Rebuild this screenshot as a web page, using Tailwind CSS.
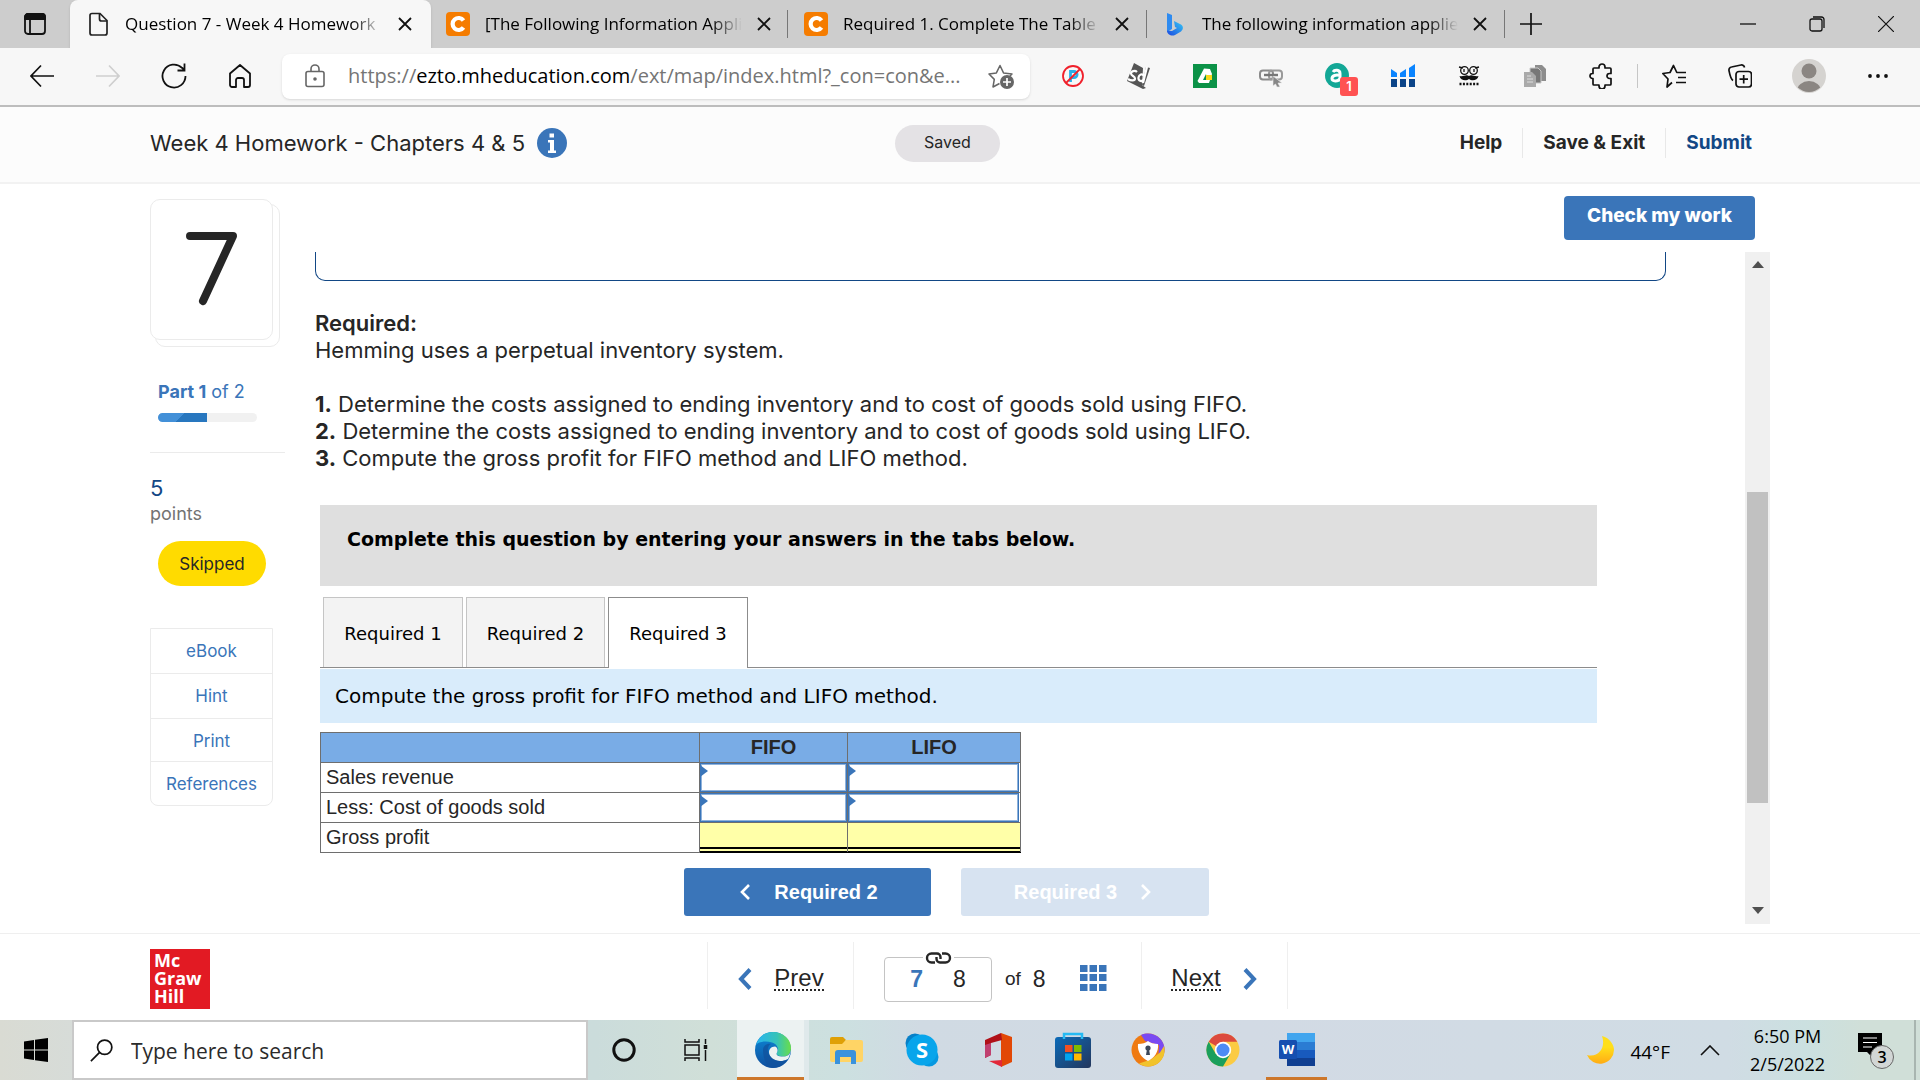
<!DOCTYPE html>
<html lang="en">
<head>
  <meta charset="UTF-8" />
  <meta name="viewport" content="width=device-width, initial-scale=1.0"/>
  <title>Question 7 - Week 4 Homework</title>
  <script src="https://cdn.jsdelivr.net/npm/@tailwindcss/browser@4"></script>
</head>
<body class="flex min-h-screen flex-col bg-white font-['Inter',sans-serif] text-[#262626]">

  <!-- Tab strip -->
  <div class="flex h-12 items-stretch bg-[#cdcdcd] font-['Open_Sans',sans-serif] text-[17px] text-black">
    <button aria-label="Tab actions" class="flex w-[70px] items-center justify-center">
      <svg width="24" height="24" viewBox="0 0 24 24" fill="none" stroke="#111" stroke-width="1.8"><rect x="2" y="2" width="20" height="20" rx="3"/><path d="M2 7V5a3 3 0 0 1 3-3h14a3 3 0 0 1 3 3v2z" fill="#111"/><path d="M7 7v15"/></svg>
    </button>
    <div class="flex w-[361px] items-center gap-[15px] rounded-t-lg bg-[#f7f7f7] pr-[19px] pl-4 shadow">
      <svg class="shrink-0" width="24" height="24" viewBox="0 0 24 24" fill="none" stroke="#222" stroke-width="1.7"><path d="M4 3.500a2 2 0 0 1 2-2h8L21 8.500V21a2 2 0 0 1-2 2H6a2 2 0 0 1-2-2z"/><path d="M13.500 1.500V7a2 2 0 0 0 2 2H21"/></svg>
      <span class="min-w-0 flex-1 overflow-hidden whitespace-nowrap [mask-image:linear-gradient(to_right,#000_88%,transparent)]">Question 7 - Week 4 Homework</span>
      <button aria-label="Close tab"><svg width="14" height="14" viewBox="0 0 14 14" stroke="#111" stroke-width="1.8"><path d="M1 1l12 12M13 1L1 13"/></svg></button>
    </div>
    <div class="flex w-[356px] items-center gap-[15px] pr-[16px] pl-[15px]">
      <svg class="shrink-0" width="24" height="24" viewBox="0 0 24 24"><rect width="24" height="24" rx="4" fill="#f57c00"/><path d="M17.500 15.500a6 6 0 1 1 0-7" fill="none" stroke="#fff" stroke-width="4.200"/></svg>
      <span class="min-w-0 flex-1 overflow-hidden whitespace-nowrap [mask-image:linear-gradient(to_right,#000_88%,transparent)]">[The Following Information Applies</span>
      <button aria-label="Close tab"><svg width="14" height="14" viewBox="0 0 14 14" stroke="#111" stroke-width="1.8"><path d="M1 1l12 12M13 1L1 13"/></svg></button>
    </div>
    <div class="my-[10px] w-px bg-[#777]"></div>
    <div class="flex w-[358px] items-center gap-[15px] pr-[17px] pl-4">
      <svg class="shrink-0" width="24" height="24" viewBox="0 0 24 24"><rect width="24" height="24" rx="4" fill="#f57c00"/><path d="M17.500 15.500a6 6 0 1 1 0-7" fill="none" stroke="#fff" stroke-width="4.200"/></svg>
      <span class="min-w-0 flex-1 overflow-hidden whitespace-nowrap [mask-image:linear-gradient(to_right,#000_88%,transparent)]">Required 1. Complete The Table To</span>
      <button aria-label="Close tab"><svg width="14" height="14" viewBox="0 0 14 14" stroke="#111" stroke-width="1.8"><path d="M1 1l12 12M13 1L1 13"/></svg></button>
    </div>
    <div class="my-[10px] w-px bg-[#777]"></div>
    <div class="flex w-[357px] items-center gap-[15px] pr-[17px] pl-4">
      <svg class="shrink-0" width="24" height="24" viewBox="0 0 24 24"><defs><linearGradient id="bing" x1="0" y1="1" x2="1" y2="0"><stop offset="0" stop-color="#1b48e0"/><stop offset="1" stop-color="#35c8f5"/></linearGradient></defs><path d="M4 1l5 2v14l-5 3z" fill="#2e8bf0"/><path d="M11 9l7 3.500c2.500 1.500 2.500 5 0 7L12 23c-3 1.500-8 0-8-4.500l5 .5 5-3-2-1z" fill="url(#bing)"/></svg>
      <span class="min-w-0 flex-1 overflow-hidden whitespace-nowrap [mask-image:linear-gradient(to_right,#000_88%,transparent)]">The following information applies</span>
      <button aria-label="Close tab"><svg width="14" height="14" viewBox="0 0 14 14" stroke="#111" stroke-width="1.8"><path d="M1 1l12 12M13 1L1 13"/></svg></button>
    </div>
    <div class="my-[10px] w-px bg-[#777]"></div>
    <button aria-label="New tab" class="flex w-[52px] items-center justify-center"><svg width="22" height="22" viewBox="0 0 22 22" stroke="#111" stroke-width="1.700"><path d="M11 0v22M0 11h22"/></svg></button>
    <div class="ml-auto flex">
      <button aria-label="Minimize" class="flex w-[69px] items-center justify-center"><svg width="16" height="16" viewBox="0 0 16 16" stroke="#111" stroke-width="1.300"><path d="M0 8h16"/></svg></button>
      <button aria-label="Restore" class="flex w-[69px] items-center justify-center"><svg width="16" height="16" viewBox="0 0 16 16" fill="none" stroke="#111" stroke-width="1.300"><rect x="1" y="3" width="12" height="12" rx="2"/><path d="M4 1h8.500a2.500 2.500 0 0 1 2.500 2.500V12"/></svg></button>
      <button aria-label="Close window" class="flex w-[69px] items-center justify-center"><svg width="16" height="16" viewBox="0 0 16 16" stroke="#111" stroke-width="1.200"><path d="M0 0l16 16M16 0L0 16"/></svg></button>
    </div>
  </div>

  <!-- Toolbar -->
  <div class="flex h-[59px] items-center border-b-2 border-[#bdbdbd] bg-[#f7f7f7] px-[9px] pb-px">
    <button aria-label="Back" class="flex w-[66px] justify-center"><svg width="24" height="24" viewBox="0 0 24 24" fill="none" stroke="#111" stroke-width="1.700"><path d="M24 12H1M11 1.500L1 12l10 10.500"/></svg></button>
    <button aria-label="Forward" class="flex w-[66px] justify-center"><svg width="24" height="24" viewBox="0 0 24 24" fill="none" stroke="#cfcfcf" stroke-width="1.700"><path d="M0 12h23M13 1.500L23 12 13 22.500"/></svg></button>
    <button aria-label="Refresh" class="flex w-[66px] justify-center"><svg width="26" height="26" viewBox="0 0 26 26" fill="none" stroke="#111" stroke-width="1.800"><path d="M24.500 13A11.500 11.500 0 1 1 21 4.800L23.500 7M23.500 0.500V7.500H16.500"/></svg></button>
    <button aria-label="Home" class="flex w-[66px] justify-center"><svg width="24" height="24" viewBox="0 0 24 24" fill="none" stroke="#111" stroke-width="1.800" stroke-linejoin="round"><path d="M2 9.500L12 1l10 8.500V21a2 2 0 0 1-2 2h-4v-7a2 2 0 0 0-2-2h-4a2 2 0 0 0-2 2v7H4a2 2 0 0 1-2-2z"/></svg></button>
    <div class="mr-[10px] ml-[9px] flex h-[45px] flex-1 items-center rounded-lg bg-white pr-4 pl-[22px] shadow-sm">
      <svg width="22" height="24" viewBox="0 0 22 24" fill="none" stroke="#666" stroke-width="1.600"><rect x="2" y="7.500" width="18" height="15" rx="2"/><path d="M7 7.500V5a4 4 0 0 1 8 0v2.500"/><circle cx="11" cy="15" r="1" fill="#666"/></svg>
      <a href="#" class="ml-[22px] min-w-0 flex-1 truncate font-['Open_Sans',sans-serif] text-[20px] text-[#757575]">https://<span class="text-black">ezto.mheducation.com</span>/ext/map/index.html?_con=con&amp;e...</a>
      <button aria-label="Add to favorites"><svg width="26" height="26" viewBox="0 0 26 26" fill="none" stroke="#666" stroke-width="1.500" stroke-linejoin="round"><path d="M11.500 20.500L5 24l1.300-7.600L1 11l7.400-1.100L12 2.500l3.500 7.400L24 11l-2 2"/><circle cx="19" cy="19" r="7" fill="#666" stroke="none"/><path d="M19 15v8M15 19h8" stroke="#fff" stroke-width="1.700"/></svg></button>
    </div>
    <button aria-label="Pinterest blocker" class="flex w-[66px] justify-center"><svg width="24" height="24" viewBox="0 0 24 24"><path d="M9.500 18V7.500H13a3 3 0 0 1 0 6.200h-2.500" fill="none" stroke="#28b0ea" stroke-width="2.800"/><circle cx="12" cy="12" r="10" fill="none" stroke="#f0202b" stroke-width="1.800"/><path d="M19 5L5 19" stroke="#f0202b" stroke-width="1.800"/></svg></button>
    <button aria-label="Scholar extension" class="flex w-[66px] justify-center"><svg width="26" height="26" viewBox="0 0 26 26"><path d="M8 0l9 5-1 17 4 3-3 1-16-8z" fill="#555"/><path d="M20 4l4 1-6 18-2-1z" fill="#555"/><path d="M11 9c-2-2-6-1-6 1.500 0 2.500 4 2.500 4 5s-4 2.500-7 .5M21 4l-4 16M17.500 12.500c-1-2-4.500-1.500-5 2s3 4.500 4.500 2.500" fill="none" stroke="#fff" stroke-width="2.200"/></svg></button>
    <button aria-label="Tag extension" class="flex w-[66px] justify-center"><svg width="24" height="24" viewBox="0 0 24 24"><rect width="24" height="24" fill="#0b9247"/><path d="M11 4.500l6 .5 2 5-3 9H6L4.500 17z" fill="#fff"/><path d="M13 10l-3 6h4z" fill="#0b9247"/><path d="M13 11h6v5h-6z" fill="#f8d91c"/></svg></button>
    <button aria-label="Link extension" class="flex w-[66px] justify-center"><svg width="26" height="24" viewBox="0 0 26 24" fill="none"><rect x="2" y="6.500" width="13" height="9" rx="3" stroke="#8b8b8b" stroke-width="2"/><rect x="11" y="6.500" width="13" height="9" rx="3" stroke="#9a9a9a" stroke-width="2"/><path d="M6 11h14" stroke="#777" stroke-width="2.400"/><path d="M15 12l9 7h-4l2 4h-3l-1.500-3-2.500 2z" fill="#888" stroke="#eee" stroke-width=".6"/></svg></button>
    <button aria-label="Honey offers, 1 new" class="relative flex w-[66px] justify-center"><svg width="24" height="26" viewBox="0 0 24 26"><ellipse cx="12" cy="12.500" rx="12" ry="12.500" fill="#13a796"/><path d="M8 9c1.500-2.500 7-2.500 7 1.500v8M15 12.500c-4-1-8 0-8 3s6 3.500 8 0" fill="none" stroke="#fff" stroke-width="3"/></svg><span class="absolute top-[14px] left-[36px] flex h-[19px] w-[18px] items-center justify-center rounded-[3px] bg-[#ff5252] text-[13px] font-semibold text-white">1</span></button>
    <button aria-label="Statistics extension" class="flex w-[66px] justify-center"><svg width="26" height="24" viewBox="0 0 26 24"><path d="M1 5l6 4v4H1zM10 9l6-4v8h-6zM19 4l6-4v13h-6z" fill="#0a84ff"/><path d="M1 15h6v8H1zM10 15h6v8h-6zM19 15h6v8h-6z" fill="#0b4488"/></svg></button>
    <button aria-label="Disguise extension" class="flex w-[66px] justify-center"><svg width="24" height="24" viewBox="0 0 24 24"><g fill="none" stroke="#111" stroke-width="1.300"><circle cx="7.500" cy="6.500" r="3.800"/><circle cx="16.500" cy="6.500" r="3.800"/><path d="M2 3l4 1M22 3l-4 1M7 5v3M17 5v3"/></g><path d="M12 12c3-2 5 1 9.500 0-1 5-7 5-9.500 3-2.500 2-8.500 2-9.500-3 4.500 1 6.500-2 9.500 0z" fill="#111"/><path d="M2.500 20h19" stroke="#111" stroke-width="2.500" stroke-dasharray="2 1.400"/></svg></button>
    <button aria-label="Copy pages" class="flex w-[66px] justify-center"><svg width="24" height="24" viewBox="0 0 24 24"><path d="M12 1h7l4 4v12H12z" fill="#8d8d8d"/><path d="M7 4h8l3 3v12H7z" fill="#777" stroke="#c8c8c8"/><path d="M1 8h8l4 4v11H1z" fill="#aaa"/><path d="M4 12h4M4 15h6M4 18h6" stroke="#ddd"/></svg></button>
    <button aria-label="Extensions" class="flex w-[66px] justify-center"><svg width="24" height="26" viewBox="0 0 24 26" fill="none" stroke="#111" stroke-width="1.700" stroke-linejoin="round"><path d="M5 5h5V4a3 3 0 0 1 6 0v1h5a1 1 0 0 1 1 1v4.500h-1.500a2.500 2.500 0 0 0 0 5H22V21a1 1 0 0 1-1 1h-5v1a3 3 0 0 1-6 0v-1H5a1 1 0 0 1-1-1v-5.500H3.500a2.500 2.500 0 0 1 0-5H4V6a1 1 0 0 1 1-1z"/></svg></button>
    <div class="mx-[3px] h-6 w-px bg-[#c6c6c6]"></div>
    <button aria-label="Favorites" class="flex w-[66px] justify-center"><svg width="24" height="24" viewBox="0 0 24 24" fill="none" stroke="#111" stroke-width="1.700" stroke-linejoin="round"><path d="M10 18.500L5 23l1-8L.8 9.500l7.200-1L11.500 1.500l3.300 7H24M16 13.500h8M14 18.500h10"/></svg></button>
    <button aria-label="Collections" class="flex w-[66px] justify-center"><svg width="24" height="24" viewBox="0 0 24 24" fill="none" stroke="#111" stroke-width="1.700"><rect x="8" y="7.500" width="15.500" height="15.500" rx="3"/><path d="M15.700 11v8.500M11.500 15.200H20M5 16.500C2.500 15 1.500 9 1 6.500a3 3 0 0 1 2.500-3.500L13 1a3 3 0 0 1 3.500 2.500"/></svg></button>
    <button aria-label="Profile" class="mx-[3px] flex w-[66px] justify-center"><svg width="34" height="34" viewBox="0 0 34 34"><defs><clipPath id="av"><circle cx="17" cy="17" r="16"/></clipPath></defs><circle cx="17" cy="17" r="17" fill="#d5d3d0"/><g clip-path="url(#av)" fill="#8b8682"><circle cx="17" cy="12" r="7.500"/><ellipse cx="17" cy="32" rx="12" ry="10"/></g></svg></button>
    <button aria-label="Settings and more" class="flex w-[66px] justify-center"><svg width="20" height="6" viewBox="0 0 20 6" fill="#111"><circle cx="2" cy="3" r="1.900"/><circle cx="10" cy="3" r="1.900"/><circle cx="18" cy="3" r="1.900"/></svg></button>
  </div>

  <!-- Assignment header -->
  <header class="flex h-[77px] items-center border-b-2 border-[#f2f2f2] bg-[#fcfcfc] px-[150px] pb-[3px]">
    <div class="flex w-[745px] items-center gap-3">
      <h1 class="text-[22px]">Week 4 Homework - Chapters 4 &amp; 5</h1>
      <button aria-label="Assignment information"><svg width="30" height="30" viewBox="0 0 30 30"><circle cx="15" cy="15" r="15" fill="#3a75b9"/><path d="M12.500 5.500h4.500v4h-4.500zM11 12h6v10.500h2V25h-8v-2.500h2v-8h-2z" fill="#fff"/></svg></button>
    </div>
    <div class="flex h-[37px] w-[105px] items-center justify-center rounded-full bg-[#e4e2e5] pb-[2px] text-[16px]">Saved</div>
    <nav class="ml-auto flex items-center text-[19px] leading-[30px] font-bold">
      <a href="#" class="px-5">Help</a>
      <a href="#" class="border-x border-[#e8e8e8] px-5">Save &amp; Exit</a>
      <a href="#" class="pr-[18px] pl-5 text-[#124785]">Submit</a>
    </nav>
  </header>

  <!-- Question -->
  <main class="flex flex-1 items-start gap-[30px] px-[150px] pb-[9px]">
    <aside class="w-[135px] pt-[15px]">
      <div class="relative h-[148px] w-[131px]">
        <div class="absolute top-[5px] left-[5px] h-[143px] w-[125px] rounded-[10px] border border-[#ebebeb]"></div>
        <div class="relative flex h-[141px] w-[123px] items-center justify-center rounded-[10px] border border-[#ebebeb] bg-white pb-[2px]">
          <svg role="img" aria-label="7" width="52" height="74" viewBox="0 0 52 74" fill="none" stroke="#262626" stroke-width="8" stroke-linecap="round" stroke-linejoin="round"><path d="M4 4h43L17 69"/></svg>
        </div>
      </div>
      <div class="pt-[31px] pl-2 text-[18px] leading-[28px] text-[#3a75b9]"><b>Part 1</b> of 2</div>
      <div class="mt-[7px] ml-2 h-[9px] w-[99px] overflow-hidden rounded-full bg-[#f1f1f1]">
        <div class="h-full bg-linear-[135deg,#4390d8_45%,#2877bf_45%]" style="width:49%"></div>
      </div>
      <div class="mt-[30px] border-t border-[#ebebeb] pt-[22px] text-[22px] leading-[26px] text-[#124785]">5</div>
      <div class="text-[18px] leading-[26px] text-[#737373]">points</div>
      <div class="mt-[14px] ml-2 flex h-[45px] w-[108px] items-center justify-center rounded-full bg-[#ffdb00] pt-[2px] text-[17px]">Skipped</div>
      <nav class="mt-[42px] flex w-[123px] flex-col divide-y divide-[#ebebeb] rounded-b-lg border border-[#ebebeb] text-center text-[17px] leading-[44px] text-[#3a75b9]">
        <a href="#">eBook</a>
        <a href="#">Hint</a>
        <a href="#" class="h-[43px]">Print</a>
        <a href="#" class="h-[43px]">References</a>
      </nav>
    </aside>

    <section class="min-w-0 flex-1">
      <div class="flex h-[68px] items-start justify-end pt-3 pr-[15px]">
        <button class="h-11 w-[191px] rounded bg-[#3a75b9] pb-1 text-[19px] font-extrabold text-white">Check my work</button>
      </div>
      <div class="flex">
        <div class="min-w-0 flex-1 pr-[79px] pb-2">
          <div class="h-[29px] rounded-b-[10px] border border-t-0 border-[#124785]"></div>
          <div class="mt-[29px] text-[22px] leading-[27px]">
            <p class="font-semibold">Required:</p>
            <p>Hemming uses a perpetual inventory system.</p>
            <p class="mt-[27px]"><b>1.</b> Determine the costs assigned to ending inventory and to cost of goods sold using FIFO.</p>
            <p><b>2.</b> Determine the costs assigned to ending inventory and to cost of goods sold using LIFO.</p>
            <p><b>3.</b> Compute the gross profit for FIFO method and LIFO method.</p>
          </div>

          <div class="mt-[33px] mr-[69px] ml-[5px] font-['DejaVu_Sans',sans-serif] text-black">
            <div class="h-[81px] bg-[#dfdfdf] px-[27px] pt-5 text-[19px] font-bold">Complete this question by entering your answers in the tabs below.</div>
            <div role="tablist" class="mt-[11px] flex gap-[3px] border-b border-[#8c8c8c] pl-[3px] text-[18px]">
              <button role="tab" class="h-[70px] w-[140px] border border-b-0 border-[#c5c5c5] bg-[#f3f3f3] pt-[2px]">Required 1</button>
              <button role="tab" class="h-[70px] w-[139px] border border-b-0 border-[#c5c5c5] bg-[#f3f3f3] pt-[2px]">Required 2</button>
              <button role="tab" aria-selected="true" class="-mb-px h-[71px] w-[140px] border border-b-0 border-[#8c8c8c] bg-white pt-px">Required 3</button>
            </div>
            <p class="mt-px h-[54px] bg-[#d9ecfb] px-[15px] text-[20px] leading-[55px]">Compute the gross profit for FIFO method and LIFO method.</p>

            <table class="mt-[9px] w-[700px] table-fixed border-collapse font-['Liberation_Sans',sans-serif] text-[20px] leading-[29px] text-[#262626]">
              <thead>
                <tr class="h-[30px] bg-[#79ace6]">
                  <th class="w-[379px] border border-[#6e6e6e] p-0"></th>
                  <th class="w-[148px] border border-[#6e6e6e] p-0">FIFO</th>
                  <th class="w-[173px] border border-[#6e6e6e] p-0">LIFO</th>
                </tr>
              </thead>
              <tbody>
                <tr class="h-[30px]">
                  <td class="border border-[#6e6e6e] px-[5px] py-0">Sales revenue</td>
                  <td class="relative border border-[#6e6e6e] p-0"><input aria-label="Sales revenue FIFO" class="block h-[29px] w-full border border-[#3a75b9] px-3 text-right inset-ring inset-ring-[#8fb2db]"/><svg class="absolute top-[2px] left-0" width="8" height="12" viewBox="0 0 8 12"><path d="M0 0l8 6-8 6z" fill="#3a75b9"/></svg></td>
                  <td class="relative border border-[#6e6e6e] p-0 pr-px"><input aria-label="Sales revenue LIFO" class="block h-[29px] w-full border border-[#3a75b9] px-3 text-right inset-ring inset-ring-[#8fb2db]"/><svg class="absolute top-[2px] left-0" width="8" height="12" viewBox="0 0 8 12"><path d="M0 0l8 6-8 6z" fill="#3a75b9"/></svg></td>
                </tr>
                <tr class="h-[30px]">
                  <td class="border border-[#6e6e6e] px-[5px] py-0">Less: Cost of goods sold</td>
                  <td class="relative border border-[#6e6e6e] p-0"><input aria-label="Cost of goods sold FIFO" class="block h-[29px] w-full border border-[#3a75b9] px-3 text-right inset-ring inset-ring-[#8fb2db]"/><svg class="absolute top-[2px] left-0" width="8" height="12" viewBox="0 0 8 12"><path d="M0 0l8 6-8 6z" fill="#3a75b9"/></svg></td>
                  <td class="relative border border-[#6e6e6e] p-0 pr-px"><input aria-label="Cost of goods sold LIFO" class="block h-[29px] w-full border border-[#3a75b9] px-3 text-right inset-ring inset-ring-[#8fb2db]"/><svg class="absolute top-[2px] left-0" width="8" height="12" viewBox="0 0 8 12"><path d="M0 0l8 6-8 6z" fill="#3a75b9"/></svg></td>
                </tr>
                <tr class="h-[30px]">
                  <td class="border border-[#6e6e6e] px-[5px] py-0">Gross profit</td>
                  <td class="border border-[#6e6e6e] border-t-black border-b-black bg-[#ffffa8] p-0 align-bottom"><div class="mb-[2px] h-[2px] bg-black"></div><div class="h-px bg-black"></div></td>
                  <td class="border border-[#6e6e6e] border-t-black border-b-black bg-[#ffffa8] p-0 align-bottom"><div class="mb-[2px] h-[2px] bg-black"></div><div class="h-px bg-black"></div></td>
                </tr>
              </tbody>
            </table>

            <div class="mt-[15px] flex justify-center gap-[30px] pr-[25px] font-['Liberation_Sans',sans-serif] text-[20px] font-bold text-white">
              <button class="flex h-12 w-[247px] items-center justify-center gap-6 rounded-[3px] bg-[#3a75b9] pl-1"><svg width="10" height="16" viewBox="0 0 10 16" fill="none" stroke="#fff" stroke-width="2.600"><path d="M9 1L2 8l7 7"/></svg>Required 2</button>
              <button disabled class="flex h-12 w-[248px] items-center justify-center gap-6 rounded-[3px] bg-[#d7e3f1] pr-1">Required 3<svg width="10" height="16" viewBox="0 0 10 16" fill="none" stroke="#fff" stroke-width="2.600"><path d="M1 1l7 7-7 7"/></svg></button>
            </div>
          </div>
        </div>

        <!-- Scroll bar of the question pane -->
        <div class="flex w-[25px] flex-col items-center bg-[#f0f0f0] pt-[9px] pb-[10px]">
          <svg width="12" height="7" viewBox="0 0 12 7"><path d="M6 0l6 7H0z" fill="#505050"/></svg>
          <div class="mt-[224px] h-[311px] w-[21px] bg-[#c1c1c1]"></div>
          <svg class="mt-auto" width="12" height="7" viewBox="0 0 12 7"><path d="M0 0h12L6 7z" fill="#505050"/></svg>
        </div>
      </div>
    </section>
  </main>

  <!-- Question navigation -->
  <footer class="flex h-[87px] border-t border-[#efefef] font-['Liberation_Sans',sans-serif] text-[24px]">
    <div class="flex w-[707px] pt-[15px] pl-[150px]">
      <div class="h-[60px] w-[60px] bg-[#e21a23] pt-[2px] pl-1 font-['Open_Sans',sans-serif] text-[18px] leading-[18px] font-bold text-white">Mc<br>Graw<br>Hill</div>
    </div>
    <div class="mt-2 flex h-[67px] items-center border-x border-[#efefef]">
      <a href="#" class="flex w-[145px] items-center justify-center gap-[22px] pt-[6px]"><svg width="15" height="22" viewBox="0 0 15 22" fill="none" stroke="#3a75b9" stroke-width="4"><path d="M13 1.500L4 11l9 9.500"/></svg><span class="border-b-2 border-dotted border-[#262626] leading-[23px]">Prev</span></a>
      <div class="flex h-[67px] w-[289px] items-center border-x border-[#efefef] pl-[30px]">
        <div class="relative mt-[7px] flex h-[45px] w-[108px] items-center justify-center gap-[30px] rounded border border-[#c4c4c4] text-[23px]">
          <b class="text-[#3a75b9]">7</b><span>8</span>
          <svg class="absolute -top-[6px] left-[38px] bg-white" width="31" height="12" viewBox="0 0 31 12" fill="none" stroke="#262626" stroke-width="2.400"><path d="M12 10.500H8.500a4.500 4.500 0 0 1 0-9H14a3.500 3.500 0 0 1 3.500 3.500v2M19 1.500h3.500a4.500 4.500 0 0 1 0 9H17a3.500 3.500 0 0 1-3.500-3.500v-2"/></svg>
        </div>
        <span class="mt-[8px] ml-[13px] text-[19px]">of</span><span class="mt-[7px] ml-3 text-[23px]">8</span>
        <button aria-label="Question list" class="mt-[4px] ml-[34px]"><svg width="27" height="26" viewBox="0 0 27 26" fill="#3a75b9"><path d="M0 0h7.500v7H0zM9.500 0H17v7H9.500zM19 0h7.500v7H19zM0 9h7.500v7H0zM9.500 9H17v7H9.500zM19 9h7.500v7H19zM0 19h7.500v7H0zM9.500 19H17v7H9.500zM19 19h7.500v7H19z"/></svg></button>
      </div>
      <a href="#" class="flex w-[145px] items-center justify-center gap-[22px] pt-[6px]"><span class="border-b-2 border-dotted border-[#262626] leading-[23px]">Next</span><svg width="15" height="22" viewBox="0 0 15 22" fill="none" stroke="#3a75b9" stroke-width="4"><path d="M2 1.500L11 11l-9 9.500"/></svg></a>
    </div>
  </footer>

  <!-- Taskbar -->
  <div class="flex h-[60px] bg-linear-[90deg,#d9dbd3_0%,#d6dcda_5%,#cbdcdb_31%,#d0dfd8_37%,#cce0e0_44%,#d0dae3_48%,#d2dae4_65%,#d0dce4_90%,#cbe0e0_94%,#d0dfd8_97%] font-['Open_Sans',sans-serif] text-black">
    <button aria-label="Start" class="flex w-[72px] items-center justify-center"><svg width="24" height="24" viewBox="0 0 24 24"><path d="M0 3.500L10 2v9.500H0zM11 1.800L24 0v11.500H11zM0 12.500h10V22L0 20.500zM11 12.500h13V24l-13-1.800z"/></svg></button>
    <label class="flex w-[516px] items-center gap-[18px] border-2 border-[#c9c9c9] bg-white pl-4">
      <svg width="25" height="25" viewBox="0 0 25 25" fill="none" stroke="#111" stroke-width="1.900"><circle cx="16" cy="9" r="7.800"/><path d="M10.500 14.500L1 24"/></svg>
      <input aria-label="Search" placeholder="Type here to search" class="w-full pt-1 text-[21px] placeholder:text-[#2b2b2b]"/>
    </label>
    <button aria-label="Cortana" class="flex w-[72px] items-center justify-center"><svg width="24" height="24" viewBox="0 0 24 24" fill="none" stroke="#111" stroke-width="3"><circle cx="12" cy="12" r="10.200"/></svg></button>
    <button aria-label="Task view" class="flex w-[72px] items-center justify-center"><svg width="24" height="24" viewBox="0 0 24 24" fill="none" stroke="#111" stroke-width="1.500"><rect x="1" y="7" width="14" height="10"/><path d="M1 1v3h14V1M1 23v-3h14v3M21.500 1v5M21.500 12v11"/><path d="M21.500 7v4" stroke-width="3.500"/></svg></button>
    <button aria-label="Microsoft Edge" class="ml-[5px] flex w-[72px] border-r-[5px] border-[#dfe9eb] bg-[#cd772b] pb-[3px]">
      <span class="flex h-full w-full justify-center bg-[#ecf2f2] pt-3 pl-1"><svg width="36" height="36" viewBox="0 0 36 36"><defs><linearGradient id="e1" x1="0" x2="1"><stop offset="0" stop-color="#28b4f0"/><stop offset=".6" stop-color="#36c3b8"/><stop offset="1" stop-color="#6ade48"/></linearGradient><linearGradient id="e2" x1="0" y1="0" x2="0" y2="1"><stop offset="0" stop-color="#0c8ad8"/><stop offset="1" stop-color="#0f4f9e"/></linearGradient></defs><circle cx="18" cy="18" r="18" fill="url(#e2)"/><path d="M1 13C4 4 10 0 18 0c10 0 18 7 18 16 0 6-4 8.500-8 8.500-5 0-7-2-6-4 2-3 1-8-5-10C11 8.500 4 9.500 1 13z" fill="url(#e1)"/><path d="M14 20c0 5 5 9 11 9 3 0 5-.5 8-2l1-2 2-6v-1c-1 5-4 6.500-8 6.500-5 0-7.500-1.500-6-4 1.500-2.500 0-5.500-2-6-4 0-6 3-6 5.500z" fill="#ecf2f2"/><path d="M8 18c0-4 4-7 8-6-3 1-5 7-1 12s12 7 18 3c-4 7-12 9-16 9-5-1-9-9-9-18z" fill="#11529c" opacity=".75"/></svg></span>
    </button>
    <button aria-label="File Explorer" class="flex w-[75px] items-center justify-center"><svg width="33" height="33" viewBox="0 -3 33 33"><path d="M0 2a2 2 0 0 1 2-2h11l3 3-3 4H0z" fill="#dfa006"/><path d="M0 7h12l4-4h15a2 2 0 0 1 2 2v18a2 2 0 0 1-2 2H2a2 2 0 0 1-2-2z" fill="#ffd465"/><path d="M5 27V16a3 3 0 0 1 3-3h15a3 3 0 0 1 3 3v11h-5v-7H10v7z" fill="#3a92dc"/></svg></button>
    <button aria-label="Skype" class="flex w-[76px] items-center justify-center"><svg width="34" height="34" viewBox="0 0 34 34"><circle cx="10" cy="10" r="9.500" fill="#0780c8"/><circle cx="24" cy="24" r="9.500" fill="#0798e0"/><circle cx="17" cy="17" r="15.500" fill="#08a5eb"/><text x="17" y="25" text-anchor="middle" font-family="Open Sans" font-size="22" font-weight="700" fill="#fff">S</text></svg></button>
    <button aria-label="Office" class="flex w-[75px] items-center justify-center"><svg width="28" height="34" viewBox="0 0 28 34"><path d="M17 0l11 4v25l-11 5z" fill="#e24806"/><path d="M17 0L1 7v18l6-3V10l11-3z" fill="#b01018"/><path d="M1 12l6-2v12l-6 3z" fill="#c04070"/><path d="M5 28l13-1v7z" fill="#e22839"/></svg></button>
    <button aria-label="Microsoft Store" class="flex w-[75px] items-center justify-center"><svg width="36" height="36" viewBox="0 0 36 36"><defs><linearGradient id="st" x1="0" y1="0" x2="1" y2="1"><stop offset="0" stop-color="#0a6ab8"/><stop offset="1" stop-color="#24365c"/></linearGradient></defs><rect y="5" width="36" height="31" rx="3" fill="url(#st)"/><path d="M9 7V2h18v5" fill="none" stroke="#25baf3" stroke-width="2.500"/><path d="M10 13h7.500v7H10z" fill="#f25022"/><path d="M19 13h7.500v7H19z" fill="#7fba00"/><path d="M10 21.500h7.500v7H10z" fill="#00a4ef"/><path d="M19 21.500h7.500v7H19z" fill="#ffb900"/></svg></button>
    <button aria-label="Secure Browser" class="flex w-[75px] items-center justify-center"><svg width="34" height="34" viewBox="0 0 34 34"><circle cx="17" cy="17" r="16.500" fill="#ef7a12"/><path d="M10 2C21-3 34 5 33.500 17c0 4-3 7-6 7L28 12 14 8z" fill="#7a4af2"/><path d="M33 13c3 10-5 21-16 20.500-5 0-9-3-9-3l12-4 9-7z" fill="#f1c32c"/><path d="M7 11c4 0 8-1 10-3 2 2 6 3 10 3 1 8-4 14-10 17C11 25 6 19 7 11z" fill="#fff"/><circle cx="17" cy="15" r="2.600" fill="#3c4759"/><path d="M16 16h2l1 6h-4z" fill="#3c4759"/></svg></button>
    <button aria-label="Google Chrome" class="flex w-[75px] items-center justify-center"><svg width="34" height="34" viewBox="0 0 34 34"><circle cx="17" cy="17" r="16.500" fill="#fbcb43"/><path d="M17 17L2.700 8.700A16.500 16.500 0 0 1 31.300 8.700H17z" fill="#dc4a3e"/><path d="M2.700 8.700A16.500 16.500 0 0 0 17 33.500l7.200-12.300L17 17l-7.200 4z" fill="#1a9f5c"/><circle cx="17" cy="17" r="8.200" fill="#fff"/><circle cx="17" cy="17" r="6.500" fill="#4c8bf5"/></svg></button>
    <button aria-label="Microsoft Word" class="ml-[6px] flex w-[61px] items-start justify-center border-b-[3px] border-[#cd772b] pt-[13px]"><svg width="36" height="34" viewBox="0 0 36 34"><path d="M8 0h28v9H8z" fill="#41a5ee"/><path d="M8 9h28v8H8z" fill="#2b7cd3"/><path d="M8 17h28v8H8z" fill="#185abd"/><path d="M8 25h28v8H8z" fill="#103f91"/><rect y="7" width="18" height="19" rx="1.500" fill="#164fb0"/><text x="9" y="21" text-anchor="middle" font-family="Open Sans" font-size="13" font-weight="700" fill="#fff">W</text></svg></button>
    <div class="ml-auto flex items-center">
      <button class="flex items-center gap-4 text-[19px]"><svg width="28" height="28" viewBox="0 0 28 28"><defs><linearGradient id="mn" x1="0" y1="0" x2="0" y2="1"><stop offset=".4" stop-color="#ffdf1b"/><stop offset="1" stop-color="#ffab14"/></linearGradient></defs><path d="M16 0c8 2 12 9 12 14a14 14 0 0 1-27 5c12 3 19-8 15-19z" fill="url(#mn)"/></svg><span class="pt-1">44°F</span></button>
      <button aria-label="Show hidden icons" class="mx-[30px]"><svg width="20" height="11" viewBox="0 0 20 11" fill="none" stroke="#111" stroke-width="1.600"><path d="M1 10l9-9 9 9"/></svg></button>
      <div class="text-center text-[18px] leading-7"><div>6:50 PM</div><div>2/5/2022</div></div>
      <button aria-label="Notifications" class="relative mr-5 ml-[33px]"><svg width="36" height="44" viewBox="0 0 36 44"><path d="M0 5h24v19h-9v6l-6-6H0z"/><path d="M5 10h14M5 14.500h14M5 19h9" stroke="#fff" stroke-width="1.200"/><circle cx="24" cy="29" r="11.500" fill="#d2d6d5" stroke="#666"/><text x="24" y="35" text-anchor="middle" font-family="Open Sans" font-size="16" font-weight="600">3</text></svg></button>
      <div class="mr-1 h-[60px] w-[2px] bg-[#a8b5b0]"></div>
    </div>
  </div>
</body>
</html>
